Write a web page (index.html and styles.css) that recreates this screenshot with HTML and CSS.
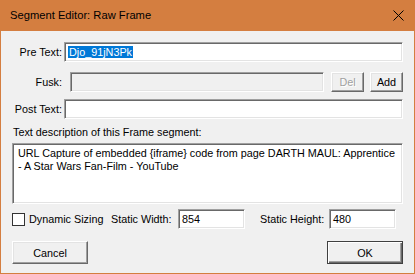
FILE: index.html
```html
<!DOCTYPE html>
<html lang="en">
<head>
  <meta charset="UTF-8" />
  <title>Segment Editor: Raw Frame</title>
  <link rel="stylesheet" href="styles.css">
</head>
<body>
  <div class="window">
    <div class="titlebar">
      <span class="title">Segment Editor: Raw Frame</span>
      <svg class="close" width="11" height="11" viewBox="0 0 11 11">
        <path d="M0.5 0.5 L10.5 10.5 M10.5 0.5 L0.5 10.5" stroke="#000" stroke-width="1" fill="none"/>
      </svg>
    </div>
    <div class="content">
      <div class="row row-pre">
        <label class="lbl">Pre Text:</label>
        <div class="field"><span class="sel">Djo_91jN3Pk</span></div>
      </div>
      <div class="row row-fusk">
        <label class="lbl">Fusk:</label>
        <div class="field disabled"></div>
        <button class="btn small" disabled>Del</button>
        <button class="btn small">Add</button>
      </div>
      <div class="row row-post">
        <label class="lbl">Post Text:</label>
        <div class="field"></div>
      </div>
      <div class="desc-label">Text description of this Frame segment:</div>
      <div class="field memo">URL Capture of embedded {iframe} code from page DARTH MAUL: Apprentice - A Star Wars Fan-Film - YouTube</div>
      <div class="sizing">
        <span class="check"></span>
        <span class="check-label">Dynamic Sizing</span>
        <span class="size-label">Static Width:</span>
        <div class="field num">854</div>
        <span class="size-label h">Static Height:</span>
        <div class="field num">480</div>
      </div>
      <div class="actions">
        <button class="btn big">Cancel</button>
        <button class="btn big default">OK</button>
      </div>
    </div>
  </div>
</body>
</html>
```

FILE: styles.css
```css
body {
  margin: 0;
  font-family: "Liberation Sans", Arial, sans-serif;
  font-size: 10.8px;
  color: #000;
}

.window {
  width: 413px;
  height: 273px;
  background: #f0f0f0;
  border: 1px solid #d47e40;
  border-top: none;
}

.titlebar {
  height: 31px;
  background: #d47e40;
  display: flex;
  align-items: center;
  justify-content: space-between;
  padding: 0 10px 1px 9px;
  box-sizing: border-box;
}

.title {
  font-size: 11.2px;
}

.close {
  display: block;
}

.content {
  padding: 0 11px;
  white-space: nowrap;
}

.row {
  display: flex;
  align-items: center;
  height: 20px;
}

.row-pre {
  margin-top: 11px;
}

.row-fusk {
  margin-top: 10px;
  gap: 6px;
}

.row-fusk .field {
  margin-right: 1px;
}

.row-post {
  margin-top: 7px;
}

.lbl {
  width: 50px;
  flex: none;
  text-align: right;
  padding-right: 2px;
}

.field {
  flex: 1;
  height: 20px;
  box-sizing: border-box;
  background: #fff;
  border: 1px solid;
  border-color: #a0a0a0 #fff #fff #a0a0a0;
  box-shadow: inset 1px 1px 0 #696969, inset -1px -1px 0 #e3e3e3;
  padding: 2px 3px;
  line-height: 14px;
}

.field.disabled {
  background: #f0f0f0;
}

.sel {
  background: #0078d7;
  color: #fff;
  padding: 0 1px;
}

.btn {
  font-family: inherit;
  font-size: 10.8px;
  background: #f0f0f0;
  color: #000;
  border: 1px solid;
  border-color: #fff #696969 #696969 #fff;
  box-shadow: inset -1px -1px 0 #a0a0a0, inset 1px 1px 0 #e3e3e3;
  padding: 0;
  box-sizing: border-box;
}

.btn:disabled {
  color: #a0a0a0;
  text-shadow: 1px 1px 0 #fff;
}

.btn.small {
  width: 33px;
  height: 20px;
}

.btn.big {
  width: 76px;
  height: 23px;
}

.btn.default {
  border-color: #404040;
  box-shadow: inset 1px 1px 0 #fff, inset -1px -1px 0 #696969, inset -2px -2px 0 #a0a0a0;
}

.desc-label {
  margin-top: 5px;
  height: 16px;
  line-height: 16px;
  padding-left: 1px;
}

.memo {
  height: 61px;
  margin-top: 3px;
  padding: 3px 1px 3px 5px;
  line-height: 13px;
  white-space: normal;
}

.sizing {
  display: flex;
  align-items: center;
  height: 20px;
  margin-top: 5px;
}

.check {
  flex: none;
  width: 13px;
  height: 13px;
  box-sizing: border-box;
  background: #fff;
  border: 1px solid #333;
}

.check-label {
  width: 82px;
  margin-left: 4px;
}

.size-label {
  width: 67px;
}

.size-label.h {
  width: 69px;
  margin-left: 15px;
}

.field.num {
  flex: none;
  width: 67px;
}

.actions {
  display: flex;
  justify-content: space-between;
  margin-top: 12px;
}
```
